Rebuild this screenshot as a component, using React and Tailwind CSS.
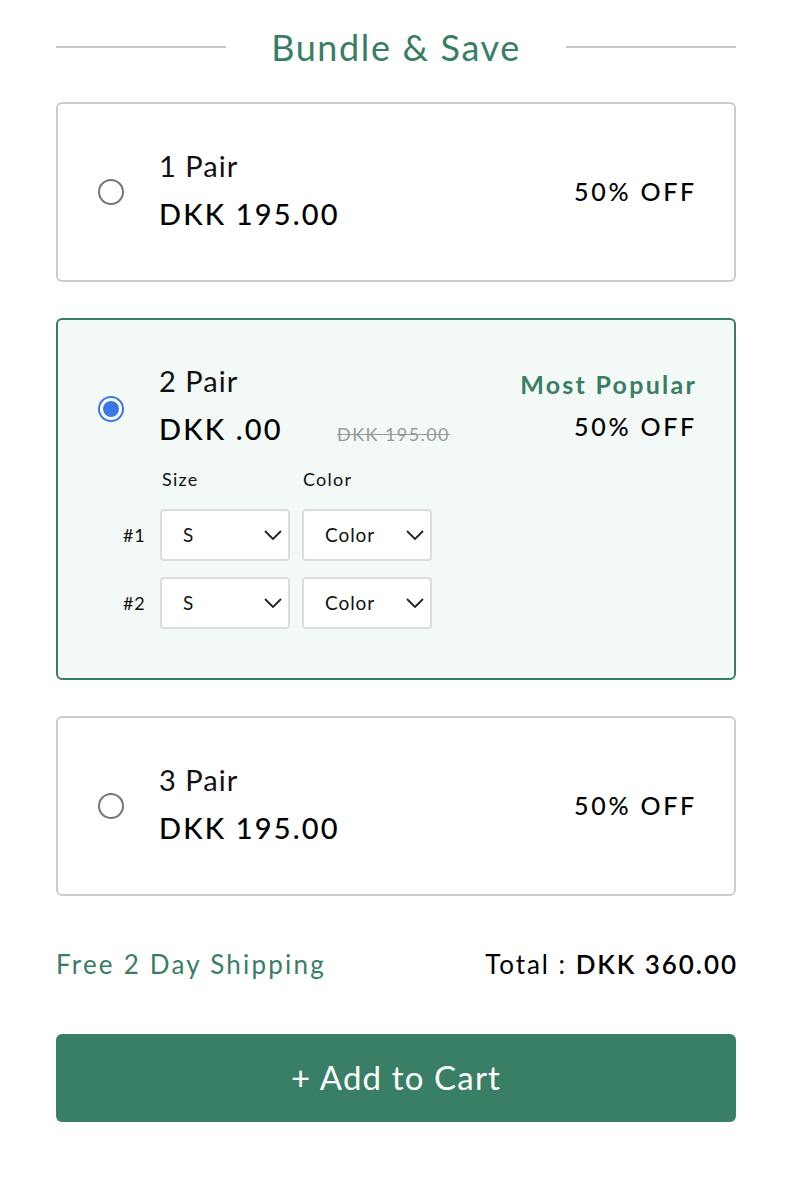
import React from "react";

const font = { fontFamily: "Lato, 'Liberation Sans', sans-serif" };

function Radio({ checked }) {
  if (checked) {
    return (
      <div className="w-[26px] h-[26px] rounded-full border-[2px] border-[#3b78e7] bg-white flex items-center justify-center shrink-0">
        <div className="w-[16px] h-[16px] rounded-full bg-[#3b78e7]" />
      </div>
    );
  }
  return <div className="w-[26px] h-[26px] rounded-full border-[2px] border-[#767676] bg-white shrink-0" />;
}

function Chevron() {
  return (
    <svg width="18" height="10" viewBox="0 0 18 10" fill="none">
      <path d="M1 1l8 8 8-8" stroke="#222" strokeWidth="1.8" />
    </svg>
  );
}

function Select({ value }) {
  return (
    <div className="w-[130px] h-[52px] bg-white border-[2px] border-[#dddddd] rounded-[4px] flex items-center justify-between pl-[21px] pr-[6px] text-[19px] tracking-[0.05em] text-[#111]">
      <span>{value}</span>
      <Chevron />
    </div>
  );
}

function SimpleCard({ label }) {
  return (
    <div className="h-[180px] border-[2px] border-[#cccccc] rounded-[6px] bg-white flex items-center pl-[40px] pr-[40px]">
      <Radio />
      <div className="ml-[35px] flex flex-col pb-[4px]">
        <div className="text-[29px] leading-[36px] tracking-[0.035em] text-[#111]">{label}</div>
        <div className="text-[29px] leading-[36px] mt-[12px] tracking-[0.075em] font-medium text-black">DKK 195.00</div>
      </div>
      <div className="ml-auto text-[25px] tracking-[0.11em] font-medium text-black -mr-[3px]">50% OFF</div>
    </div>
  );
}

export default function App() {
  return (
    <div style={font} className="w-[792px] bg-white px-[56px] pt-[26px] pb-[63px]">
      <div className="flex items-center">
        <div className="w-[170px] h-[2px] bg-[#c8c8c8]" />
        <div className="flex-1 text-center text-[36px] leading-[42px] tracking-[0.045em] text-[#3a7d65]">Bundle &amp; Save</div>
        <div className="w-[170px] h-[2px] bg-[#c8c8c8]" />
      </div>

      <div className="mt-[34px] flex flex-col gap-[36px]">
        <SimpleCard label="1 Pair" />

        <div className="h-[362px] border-[2px] border-[#3a7d65] rounded-[6px] bg-[#f3f9f7] pl-[40px] pr-[40px] pt-[43px]">
          <div className="flex">
            <div className="pt-[33px]"><Radio checked /></div>
            <div className="ml-[35px] flex flex-col">
              <div className="text-[29px] leading-[36px] tracking-[0.035em] text-[#111]">2 Pair</div>
              <div className="flex items-end mt-[12px]">
                <div className="text-[29px] leading-[36px] tracking-[0.075em] font-medium text-black w-[178px]">DKK .00</div>
                <div className="text-[18px] leading-[26px] tracking-[0.08em] text-[#9a9a9a] line-through">DKK 195.00</div>
              </div>
            </div>
            <div className="ml-auto flex flex-col items-end -mr-[3px]">
              <div className="text-[25px] leading-[36px] tracking-[0.09em] font-bold text-[#3a7d65] mt-[3px]">Most Popular</div>
              <div className="text-[25px] leading-[36px] tracking-[0.11em] mt-[6px] font-medium text-black">50% OFF</div>
            </div>
          </div>

          <div className="mt-[20px] ml-[62px] flex flex-col">
            <div className="flex text-[18px] leading-[24px] tracking-[0.07em] text-[#111]">
              <div className="w-[143px] pl-[2px]">Size</div>
              <div>Color</div>
            </div>
            <div className="mt-[18px] flex flex-col gap-[16px]">
              {["#1", "#2"].map((n) => (
                <div key={n} className="flex items-center -ml-[38px]">
                  <div className="w-[38px] pl-[1px] text-[18px] tracking-[0.05em] text-[#111]">{n}</div>
                  <div className="flex gap-[12px]">
                    <Select value="S" />
                    <Select value="Color" />
                  </div>
                </div>
              ))}
            </div>
          </div>
        </div>

        <SimpleCard label="3 Pair" />
      </div>

      <div className="mt-[49px] flex items-center justify-between">
        <div className="text-[26px] tracking-[0.085em] text-[#3a7d65]">Free 2 Day Shipping</div>
        <div className="text-[26px] tracking-[0.075em] text-black -mr-[2px]">
          Total : <span className="font-semibold">DKK 360.00</span>
        </div>
      </div>

      <button className="mt-[50px] w-full h-[88px] rounded-[6px] bg-[#397f66] text-white text-[33px] tracking-[0.035em] flex items-center justify-center">
        + Add to Cart
      </button>
    </div>
  );
}
